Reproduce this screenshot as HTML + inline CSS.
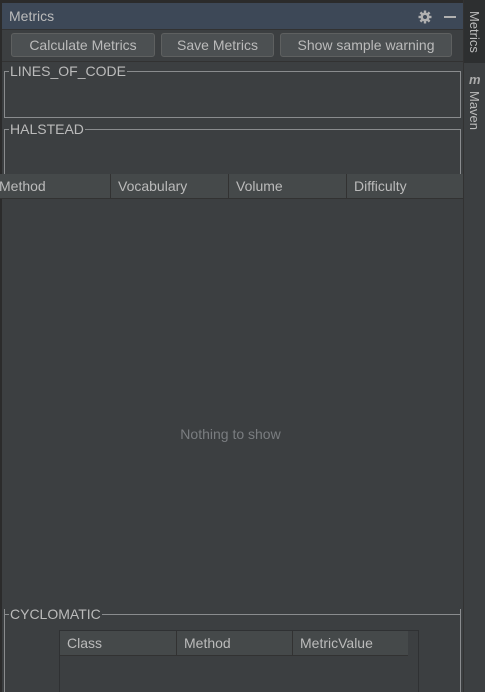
<!DOCTYPE html>
<html><head><meta charset="utf-8"><style>
*{margin:0;padding:0;box-sizing:border-box}
html,body{width:485px;height:692px;overflow:hidden}
body{background:#3c3f41;font-family:"Liberation Sans",sans-serif;color:#bbbbbb;font-size:14px;position:relative}
.abs{position:absolute}
.title{left:2px;top:3px;width:461px;height:26px;background:#3d4857;}
.title span{position:absolute;left:7px;top:5px;font-size:14px;color:#bbb}
.btn{position:absolute;top:33px;height:24px;border:1px solid #5e6060;border-radius:3px;background:#4c5052;color:#bbb;font-size:14px;text-align:center;line-height:22px}
.strip{left:463px;top:0;width:22px;height:692px;background:#3c3f41;border-left:1px solid #323232}
.vt{position:absolute;writing-mode:vertical-rl;font-size:13px;color:#bbb}
.box{position:absolute;border:1px solid #8a8c8e}
.lbl{position:absolute;background:#3c3f41;font-size:14px;color:#bbb;padding:0 1px;line-height:14px}
.th{position:absolute;top:174px;height:25px;background:#45494a;border-bottom:1px solid #323232}
.th div{position:absolute;top:0;height:24px;line-height:24px;font-size:14px;border-left:1px solid #323232;padding-left:7px}
</style></head><body>
<div class="abs" style="left:0;top:0;width:2px;height:692px;background:#2b2b2b"></div>
<div class="abs" style="left:0;top:0;width:485px;height:3px;background:#2b2b2b"></div>
<div class="abs title"><span>Metrics</span>
<svg style="position:absolute;left:416px;top:7px" width="14" height="14" viewBox="0 0 14 14"><g fill="#b0b0b0"><circle cx="7" cy="7" r="4.5"/><rect x="5.8" y="0.5" width="2.4" height="13"/><rect x="0.5" y="5.8" width="13" height="2.4"/><rect x="5.8" y="0.5" width="2.4" height="13" transform="rotate(45 7 7)"/><rect x="5.8" y="0.5" width="2.4" height="13" transform="rotate(-45 7 7)"/></g><circle cx="7" cy="7" r="2" fill="#3d4857"/></svg>
<div class="abs" style="left:442px;top:13px;width:12px;height:2px;background:#b0b0b0"></div>
</div>
<div class="abs" style="left:2px;top:29px;width:461px;height:1px;background:#323232"></div>
<div class="btn" style="left:11px;width:144px">Calculate Metrics</div>
<div class="btn" style="left:161px;width:113px">Save Metrics</div>
<div class="btn" style="left:280px;width:172px">Show sample warning</div>
<div class="abs" style="left:2px;top:61px;width:461px;height:1px;background:#323232"></div>

<div class="box" style="left:4px;top:71px;width:457px;height:47px"></div>
<div class="lbl" style="left:9px;top:64px">LINES_OF_CODE</div>
<div class="box" style="left:4px;top:129px;width:457px;height:486px"></div>
<div class="lbl" style="left:9px;top:122px">HALSTEAD</div>

<div class="th" style="left:0;width:463px">
<div style="left:-8px;width:119px;border-left:none">Method</div>
<div style="left:110px;width:119px">Vocabulary</div>
<div style="left:228px;width:118px">Volume</div>
<div style="left:346px;width:117px">Difficulty</div>
</div>
<div class="abs" style="left:2px;top:199px;width:461px;height:410px;background:#3c3f41"></div>
<div class="abs" style="left:0;top:426px;width:461px;text-align:center;color:#7a7d80;font-size:14px">Nothing to show</div>

<div class="box" style="left:4px;top:614px;width:457px;height:90px"></div>
<div class="lbl" style="left:9px;top:607px">CYCLOMATIC</div>
<div class="abs" style="left:59px;top:630px;width:360px;height:70px;border:1px solid #2f3133;background:#3c3f41"></div>
<div class="th" style="left:60px;top:631px;width:348px;height:25px">
<div style="left:0;width:117px;border-left:none">Class</div>
<div style="left:116px;width:117px">Method</div>
<div style="left:232px;width:116px">MetricValue</div>
</div>

<div class="abs strip">
<div class="abs" style="left:0;top:0;width:22px;height:63px;background:#2d2f30"></div>
<div class="vt" style="left:3px;top:11px">Metrics</div>
<div class="abs" style="left:5px;top:72px;font-size:13px;font-weight:bold;font-style:italic;color:#aaa">m</div>
<div class="vt" style="left:3px;top:91px">Maven</div>
</div>
</body></html>
